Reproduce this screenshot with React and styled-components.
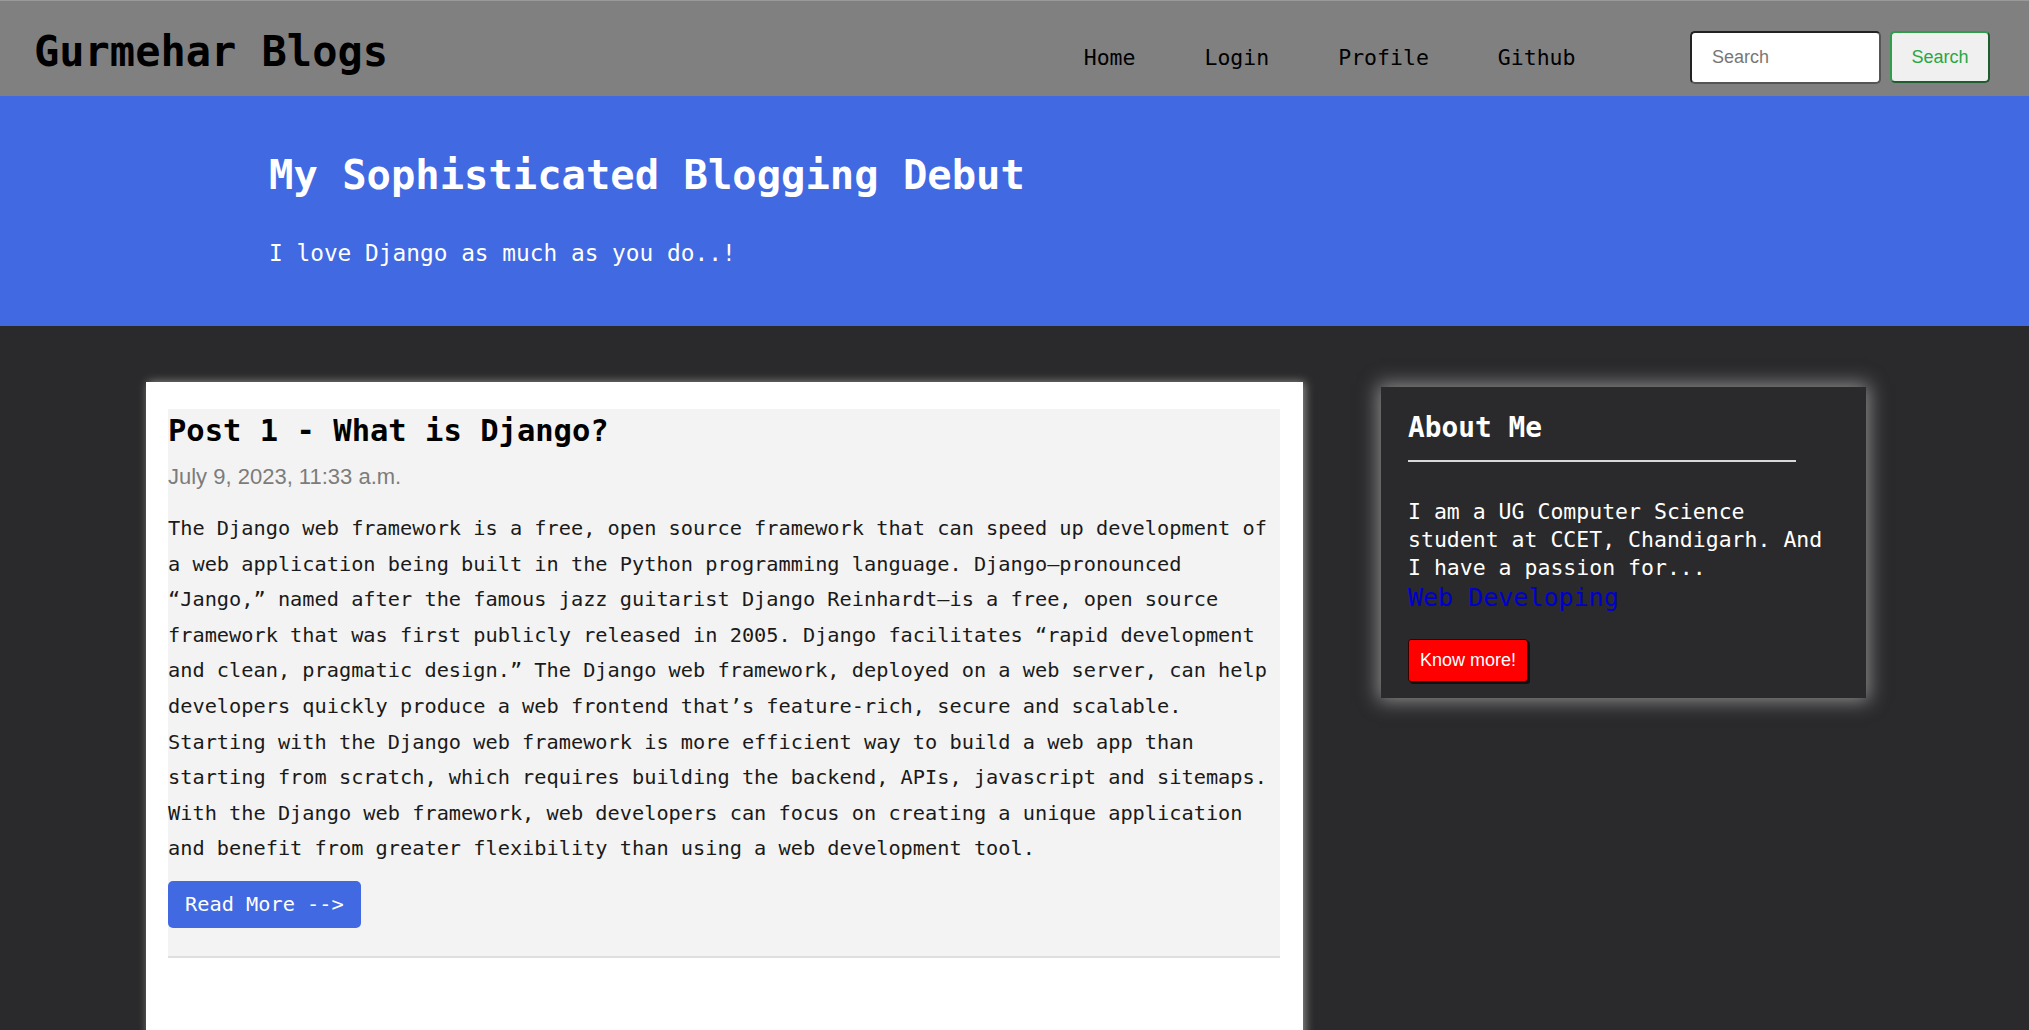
import React from 'react';
import styled, { createGlobalStyle } from 'styled-components';

const mono = `"DejaVu Sans Mono", "Liberation Mono", monospace`;
const sans = `"Liberation Sans", Arial, sans-serif`;

const GlobalStyle = createGlobalStyle`
    body {
        margin: 0;
        background-color: #2a2a2c;
        font-family: ${mono};
    }
    * { box-sizing: border-box; }
`

const Navbar = styled.nav`
    display: flex;
    align-items: center;
    height: 96px;
    padding: 17px 39px 0 34px;
    background-color: #808080;
    border-top: 1px solid #9a9a9a;
`

const Brand = styled.a`
    font-family: ${mono};
    font-size: 42px;
    font-weight: bold;
    color: #000;
    text-decoration: none;
    margin-top: -12px;
`

const NavLinks = styled.ul`
    display: flex;
    list-style: none;
    margin: 0 80px 0 auto;
    padding: 0;
    > li > a {
        display: block;
        padding: 0 34.5px;
        font-size: 21.5px;
        color: #000;
        text-decoration: none;
    }
`

const SearchForm = styled.form`
    display: flex;
    gap: 9px;
    align-items: center;
`

const SearchInput = styled.input`
    width: 191px;
    height: 53px;
    padding: 0 20px;
    font-family: ${sans};
    font-size: 18px;
    border: 2px solid #222;
    border-bottom-color: #555;
    border-right-color: #555;
    border-radius: 5px;
    background: #fff;
    &::placeholder { color: #777; }
`

const SearchButton = styled.button`
    width: 100px;
    height: 52px;
    font-family: ${sans};
    font-size: 18px;
    color: #28a745;
    background: #f0f0f0;
    border: 2px solid #2f9e4b;
    border-bottom-color: #1f5c2e;
    border-right-color: #1f5c2e;
    border-radius: 5px;
`

const Hero = styled.header`
    height: 230px;
    padding: 51px 0 0 269px;
    background-color: #4169e1;
    color: #fff;
    > h1 {
        margin: 0;
        font-size: 40.5px;
        font-weight: bold;
        line-height: 56px;
    }
    > p {
        margin: 35px 0 0;
        font-size: 22.8px;
        line-height: 30px;
    }
`

const Main = styled.main`
    display: flex;
    align-items: flex-start;
    gap: 78px;
    padding: 56px 163px 0 146px;
`

const PostCard = styled.section`
    flex: 0 0 1157px;
    min-height: 720px;
    padding: 27px 23px 40px 22px;
    background: #fff;
    box-shadow: 2px 0 9px rgba(170, 170, 170, 0.8);
`

const Post = styled.article`
    background: #f3f3f3;
    padding-bottom: 28px;
    border-bottom: 2px solid #dedede;
`

const PostTitle = styled.h2`
    margin: 0;
    font-size: 30.5px;
    font-weight: bold;
    line-height: 44px;
    color: #000;
`

const PostDate = styled.div`
    font-family: ${sans};
    font-size: 22px;
    line-height: 30px;
    color: #7c7c7c;
    margin-top: 9px;
`

const PostBody = styled.p`
    margin: 19px 0 14px;
    font-size: 20.3px;
    line-height: 35.6px;
    color: #1a1a1a;
`

const BlueButton = styled.a`
    display: inline-flex;
    align-items: center;
    height: 47px;
    padding: 0 17px;
    font-size: 20.3px;
    color: #fff;
    background: #4169e1;
    border-radius: 5px;
    text-decoration: none;
`

const Sidebar = styled.aside`
    flex: 0 0 485px;
    margin-top: 5px;
    padding: 22px 27px 16px;
    background: #2a2a2c;
    color: #fff;
    box-shadow: 0 0 18px 3px rgba(220, 220, 220, 0.55);
    > h3 {
        margin: 0;
        font-size: 27.8px;
        font-weight: bold;
        line-height: 38px;
    }
    > hr {
        width: 388px;
        margin: 13px 0 0;
        border: none;
        border-top: 2px solid #d8d8d8;
    }
`

const AboutText = styled.p`
    margin: 36px 0 0;
    font-size: 21.5px;
    line-height: 28px;
    color: #fff;
`

const AboutLink = styled.a`
    display: block;
    font-size: 25px;
    line-height: 32px;
    color: #0000cd;
    text-decoration: none;
`

const RedButton = styled.button`
    margin-top: 25px;
    height: 43px;
    padding: 0 11px;
    font-family: ${sans};
    font-size: 18px;
    color: #fff;
    background: #ff0000;
    border: 1px solid #3a0000;
    border-radius: 3px;
    box-shadow: 2px 2px 0 #111;
`

export default function App() {
    return (
        <>
            <GlobalStyle />
            <Navbar>
                <Brand href="#">Gurmehar Blogs</Brand>
                <NavLinks>
                    <li><a href="#">Home</a></li>
                    <li><a href="#">Login</a></li>
                    <li><a href="#">Profile</a></li>
                    <li><a href="#">Github</a></li>
                </NavLinks>
                <SearchForm onSubmit={e => e.preventDefault()}>
                    <SearchInput placeholder="Search" />
                    <SearchButton type="submit">Search</SearchButton>
                </SearchForm>
            </Navbar>
            <Hero>
                <h1>My Sophisticated Blogging Debut</h1>
                <p>I love Django as much as you do..!</p>
            </Hero>
            <Main>
                <PostCard>
                    <Post>
                        <PostTitle>Post 1 - What is Django?</PostTitle>
                        <PostDate>July 9, 2023, 11:33 a.m.</PostDate>
                        <PostBody>
                            The Django web framework is a free, open source framework that can speed up development of a web application being built in the Python programming language. Django—pronounced “Jango,” named after the famous jazz guitarist Django Reinhardt—is a free, open source framework that was first publicly released in 2005. Django facilitates “rapid development and clean, pragmatic design.” The Django web framework, deployed on a web server, can help developers quickly produce a web frontend that’s feature-rich, secure and scalable. Starting with the Django web framework is more efficient way to build a web app than starting from scratch, which requires building the backend, APIs, javascript and sitemaps. With the Django web framework, web developers can focus on creating a unique application and benefit from greater flexibility than using a web development tool.
                        </PostBody>
                        <BlueButton href="#">Read More --&gt;</BlueButton>
                    </Post>
                </PostCard>
                <Sidebar>
                    <h3>About Me</h3>
                    <hr />
                    <AboutText>
                        I am a UG Computer Science student at CCET, Chandigarh. And I have a passion for...
                        <AboutLink href="#">Web Developing</AboutLink>
                    </AboutText>
                    <RedButton>Know more!</RedButton>
                </Sidebar>
            </Main>
        </>
    );
}
